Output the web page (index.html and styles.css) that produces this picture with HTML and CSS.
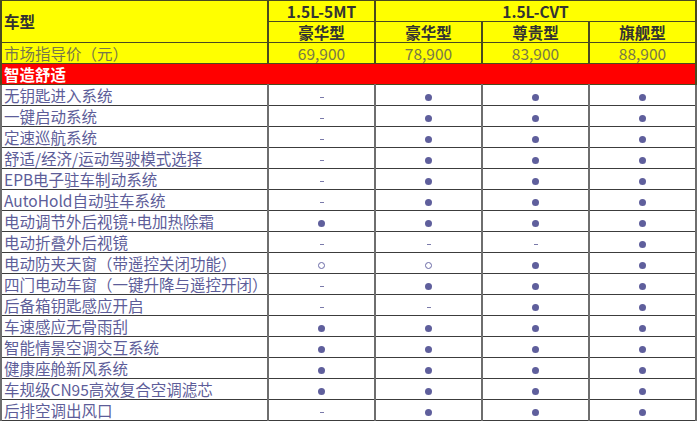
FILE: index.html
```html
<!DOCTYPE html>
<html>
<head>
<meta charset="utf-8">
<link rel="stylesheet" href="styles.css">
</head>
<body>
<table class="spec">
<colgroup>
<col class="c-name"><col class="c-v"><col class="c-v"><col class="c-v"><col class="c-v">
</colgroup>
<tr class="hd">
<td class="name bold" rowspan="2">车型</td>
<td class="bold">1.5L-5MT</td>
<td class="bold" colspan="3">1.5L-CVT</td>
</tr>
<tr class="hd">
<td class="bold">豪华型</td>
<td class="bold">豪华型</td>
<td class="bold">尊贵型</td>
<td class="bold">旗舰型</td>
</tr>
<tr class="hd price">
<td class="name">市场指导价（元）</td>
<td>69,900</td><td>78,900</td><td>83,900</td><td>88,900</td>
</tr>
<tr class="sec">
<td class="name" colspan="5">智造舒适</td>
</tr>
<tr><td class="name">无钥匙进入系统</td><td><i class="ds"></i></td><td><i class="dot"></i></td><td><i class="dot"></i></td><td><i class="dot"></i></td></tr>
<tr><td class="name">一键启动系统</td><td><i class="ds"></i></td><td><i class="dot"></i></td><td><i class="dot"></i></td><td><i class="dot"></i></td></tr>
<tr><td class="name">定速巡航系统</td><td><i class="ds"></i></td><td><i class="dot"></i></td><td><i class="dot"></i></td><td><i class="dot"></i></td></tr>
<tr><td class="name">舒适/经济/运动驾驶模式选择</td><td><i class="ds"></i></td><td><i class="dot"></i></td><td><i class="dot"></i></td><td><i class="dot"></i></td></tr>
<tr><td class="name">EPB电子驻车制动系统</td><td><i class="ds"></i></td><td><i class="dot"></i></td><td><i class="dot"></i></td><td><i class="dot"></i></td></tr>
<tr><td class="name">AutoHold自动驻车系统</td><td><i class="ds"></i></td><td><i class="dot"></i></td><td><i class="dot"></i></td><td><i class="dot"></i></td></tr>
<tr><td class="name">电动调节外后视镜+电加热除霜</td><td><i class="dot"></i></td><td><i class="dot"></i></td><td><i class="dot"></i></td><td><i class="dot"></i></td></tr>
<tr><td class="name">电动折叠外后视镜</td><td><i class="ds"></i></td><td><i class="ds"></i></td><td><i class="ds"></i></td><td><i class="dot"></i></td></tr>
<tr><td class="name">电动防夹天窗（带遥控关闭功能）</td><td><i class="ring"></i></td><td><i class="ring"></i></td><td><i class="dot"></i></td><td><i class="dot"></i></td></tr>
<tr><td class="name">四门电动车窗（一键升降与遥控开闭）</td><td><i class="ds"></i></td><td><i class="dot"></i></td><td><i class="dot"></i></td><td><i class="dot"></i></td></tr>
<tr><td class="name">后备箱钥匙感应开启</td><td><i class="ds"></i></td><td><i class="ds"></i></td><td><i class="dot"></i></td><td><i class="dot"></i></td></tr>
<tr><td class="name">车速感应无骨雨刮</td><td><i class="dot"></i></td><td><i class="dot"></i></td><td><i class="dot"></i></td><td><i class="dot"></i></td></tr>
<tr><td class="name">智能情景空调交互系统</td><td><i class="dot"></i></td><td><i class="dot"></i></td><td><i class="dot"></i></td><td><i class="dot"></i></td></tr>
<tr><td class="name">健康座舱新风系统</td><td><i class="dot"></i></td><td><i class="dot"></i></td><td><i class="dot"></i></td><td><i class="dot"></i></td></tr>
<tr><td class="name">车规级CN95高效复合空调滤芯</td><td><i class="dot"></i></td><td><i class="dot"></i></td><td><i class="dot"></i></td><td><i class="dot"></i></td></tr>
<tr><td class="name">后排空调出风口</td><td><i class="ds"></i></td><td><i class="dot"></i></td><td><i class="dot"></i></td><td><i class="dot"></i></td></tr>
</table>
</body>
</html>
```
FILE: styles.css
```css
html, body {
  margin: 0;
  padding: 0;
  background: #ffffff;
}
body {
  font-family: "Noto Sans CJK SC", "Noto Sans", sans-serif;
}
.spec {
  border-collapse: collapse;
  table-layout: fixed;
  width: 694px;
  font-size: 15.5px;
  color: #5d5d99;
}
.c-name { width: 267px; }
.c-v { width: 107px; }
.spec td {
  height: 20px;
  padding: 0;
  border: 1px solid #3c3c3c;
  border-left: 2px solid #6e6e6e;
  border-right: 2px solid #6e6e6e;
  text-align: center;
  vertical-align: middle;
  line-height: 19px;
  white-space: nowrap;
  overflow: hidden;
}
.spec td.name {
  text-align: left;
  padding-left: 2px;
}
.hd td {
  background: #ffff00;
  color: #333333;
  border-color: #4a4a20;
}
.bold {
  font-weight: bold;
}
.price td {
  color: #77774a;
  font-weight: normal;
}
.sec td {
  background: #ff0000;
  color: #ffffff;
  font-weight: bold;
  border-color: #4a4a20;
}
.dot {
  display: inline-block;
  width: 7px;
  height: 7px;
  border-radius: 50%;
  background: #5f5f9c;
  vertical-align: middle;
}
.ring {
  display: inline-block;
  width: 7px;
  height: 7px;
  border-radius: 50%;
  border: 1px solid #6a6aa6;
  box-sizing: border-box;
  vertical-align: middle;
}
.ds {
  display: inline-block;
  width: 4px;
  height: 1px;
  background: #7a7aaa;
  vertical-align: middle;
}
```
